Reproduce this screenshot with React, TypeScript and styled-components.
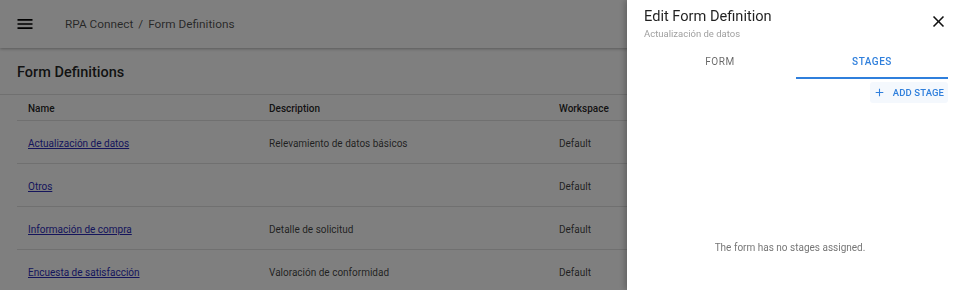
import React, { useState } from "react";
import styled, { createGlobalStyle } from "styled-components";
import { MdMenu, MdClose, MdAdd } from "react-icons/md";

const GlobalStyle = createGlobalStyle`
  html, body {
    margin: 0;
    padding: 0;
    background: #fff;
    font-family: Roboto, "Liberation Sans", Arial, sans-serif;
    overflow: hidden;
  }
`;

const Page = styled.div`
  width: 965px;
  height: 290px;
  display: flex;
  flex-direction: column;
  background: #fff;
`;

const AppBar = styled.header`
  height: 47px;
  display: flex;
  align-items: center;
  gap: 18px;
  padding: 0 0 1px 15px;
  background: #fff;
  box-shadow: 0 1px 3px rgba(0, 0, 0, 0.3);
  flex-shrink: 0;
`;

const MenuButton = styled.div`
  width: 20px;
  height: 20px;
  display: flex;
  align-items: center;
  justify-content: center;
  color: #000;
  font-size: 20px;
  margin-right: 12px;
`;

const Breadcrumb = styled.div`
  font-size: 11.8px;
  color: rgba(0, 0, 0, 0.7);
  display: flex;
  gap: 5px;
`;

const Main = styled.main`
  padding: 0;
`;

const TitleBar = styled.div`
  height: 47px;
  display: flex;
  align-items: center;
  padding: 3px 0 0 17px;
  box-sizing: border-box;
  border-bottom: 1px solid #e0e0e0;
  font-size: 14.5px;
  font-weight: 500;
  color: rgba(0, 0, 0, 0.87);
`;

const Table = styled.div`
  margin-left: 17px;
  display: grid;
  grid-template-columns: 241px 290px 1fr;
`;

const HeadCell = styled.div`
  height: 26px;
  box-sizing: border-box;
  display: flex;
  align-items: center;
  padding: 2px 0 0 11px;
  font-size: 10px;
  font-weight: 500;
  color: rgba(0, 0, 0, 0.87);
  border-bottom: 1px solid #e0e0e0;
`;

const Cell = styled.div`
  height: 43px;
  box-sizing: border-box;
  display: flex;
  align-items: center;
  padding: 2px 0 0 11px;
  font-size: 10px;
  color: rgba(0, 0, 0, 0.75);
  border-bottom: 1px solid #e0e0e0;
`;

const NameLink = styled.a`
  color: #2b2bb8;
  text-decoration: underline;
  cursor: pointer;
`;

const Backdrop = styled.div`
  position: fixed;
  inset: 0;
  background: rgba(0, 0, 0, 0.5);
`;

const Drawer = styled.aside`
  position: fixed;
  top: 0;
  right: 0;
  bottom: 0;
  width: 338px;
  background: #fff;
  box-shadow: -2px 0 6px rgba(0, 0, 0, 0.25);
  display: flex;
  flex-direction: column;
  padding: 0 17px 0 17px;
  box-sizing: border-box;
`;

const DrawerHeader = styled.div`
  display: flex;
  justify-content: space-between;
  align-items: flex-start;
  padding-top: 6px;
`;

const DrawerTitle = styled.div`
  font-size: 14.6px;
  color: rgba(0, 0, 0, 0.87);
  line-height: 20px;
`;

const DrawerSubtitle = styled.div`
  font-size: 9.5px;
  color: #a0a0a0;
  margin-top: 2px;
`;

const CloseButton = styled.div`
  font-size: 19px;
  color: #111;
  margin-top: 6px;
  margin-right: 0;
  display: flex;
`;

const Tabs = styled.div`
  display: grid;
  grid-template-columns: 1fr 1fr;
  margin-top: 6px;
`;

const Tab = styled.div<{ $active?: boolean }>`
  height: 32px;
  display: flex;
  align-items: center;
  justify-content: center;
  font-size: 10px;
  font-weight: ${(p) => (p.$active ? 500 : 400)};
  letter-spacing: 0.5px;
  color: ${(p) => (p.$active ? "#2f7fdc" : "rgba(0,0,0,0.6)")};
  border-bottom: 2px solid ${(p) => (p.$active ? "#2f7fdc" : "transparent")};
  cursor: pointer;
`;

const Actions = styled.div`
  display: flex;
  justify-content: flex-end;
  margin-top: 3px;
`;

const AddButton = styled.button`
  display: flex;
  align-items: center;
  gap: 7px;
  height: 21px;
  padding: 0 4px 0 3px;
  border: none;
  border-radius: 3px;
  background: #f4f8fd;
  color: #2f7fdc;
  font-family: inherit;
  font-size: 9.5px;
  font-weight: 500;
  letter-spacing: 0.1px;
  cursor: pointer;
  svg {
    font-size: 13px;
  }
`;

const Empty = styled.div`
  flex: 1;
  display: flex;
  align-items: flex-start;
  justify-content: center;
  padding-top: 139px;
  padding-right: 12px;
  font-size: 10px;
  color: #777;
`;

const rows = [
  { name: "Actualización de datos", description: "Relevamiento de datos básicos", workspace: "Default" },
  { name: "Otros", description: "", workspace: "Default" },
  { name: "Información de compra", description: "Detalle de solicitud", workspace: "Default" },
  { name: "Encuesta de satisfacción", description: "Valoración de conformidad", workspace: "Default" },
];

export default function App() {
  const [tab, setTab] = useState("stages");
  return (
    <>
      <GlobalStyle />
      <Page>
        <AppBar>
          <MenuButton>
            <MdMenu />
          </MenuButton>
          <Breadcrumb>
            <span>RPA Connect</span>
            <span>/</span>
            <span>Form Definitions</span>
          </Breadcrumb>
        </AppBar>
        <Main>
          <TitleBar>Form Definitions</TitleBar>
          <Table>
            <HeadCell>Name</HeadCell>
            <HeadCell>Description</HeadCell>
            <HeadCell>Workspace</HeadCell>
            {rows.map((r) => (
              <React.Fragment key={r.name}>
                <Cell>
                  <NameLink>{r.name}</NameLink>
                </Cell>
                <Cell>{r.description}</Cell>
                <Cell>{r.workspace}</Cell>
              </React.Fragment>
            ))}
          </Table>
        </Main>
      </Page>
      <Backdrop />
      <Drawer>
        <DrawerHeader>
          <div>
            <DrawerTitle>Edit Form Definition</DrawerTitle>
            <DrawerSubtitle>Actualización de datos</DrawerSubtitle>
          </div>
          <CloseButton>
            <MdClose />
          </CloseButton>
        </DrawerHeader>
        <Tabs>
          <Tab $active={tab === "form"} onClick={() => setTab("form")}>
            FORM
          </Tab>
          <Tab $active={tab === "stages"} onClick={() => setTab("stages")}>
            STAGES
          </Tab>
        </Tabs>
        <Actions>
          <AddButton>
            <MdAdd />
            ADD STAGE
          </AddButton>
        </Actions>
        <Empty>The form has no stages assigned.</Empty>
      </Drawer>
    </>
  );
}
